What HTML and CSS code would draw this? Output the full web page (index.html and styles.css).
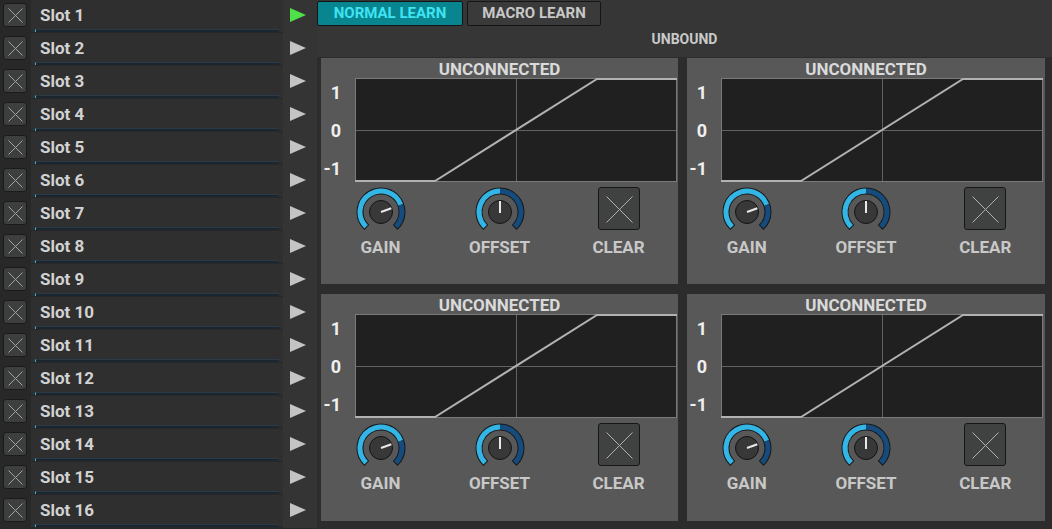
FILE: index.html
```html
<!DOCTYPE html>
<html>
<head>
<meta charset="utf-8">
<link rel="stylesheet" href="styles.css">
</head>
<body>
<div class="app">
  <div class="slots">
    <div class="slot"><div class="gutter"><div class="xbtn"><svg viewBox="0 0 22 22"><path d="M4.5 4.5L18.5 18.5M18.5 4.5L4.5 18.5"/></svg></div></div><div class="name"><span class="label">Slot 1</span><div class="meter"></div></div><div class="arrow"><span class="tri on"></span></div></div>
    <div class="slot"><div class="gutter"><div class="xbtn"><svg viewBox="0 0 22 22"><path d="M4.5 4.5L18.5 18.5M18.5 4.5L4.5 18.5"/></svg></div></div><div class="name"><span class="label">Slot 2</span><div class="meter"></div></div><div class="arrow"><span class="tri"></span></div></div>
    <div class="slot"><div class="gutter"><div class="xbtn"><svg viewBox="0 0 22 22"><path d="M4.5 4.5L18.5 18.5M18.5 4.5L4.5 18.5"/></svg></div></div><div class="name"><span class="label">Slot 3</span><div class="meter"></div></div><div class="arrow"><span class="tri"></span></div></div>
    <div class="slot"><div class="gutter"><div class="xbtn"><svg viewBox="0 0 22 22"><path d="M4.5 4.5L18.5 18.5M18.5 4.5L4.5 18.5"/></svg></div></div><div class="name"><span class="label">Slot 4</span><div class="meter"></div></div><div class="arrow"><span class="tri"></span></div></div>
    <div class="slot"><div class="gutter"><div class="xbtn"><svg viewBox="0 0 22 22"><path d="M4.5 4.5L18.5 18.5M18.5 4.5L4.5 18.5"/></svg></div></div><div class="name"><span class="label">Slot 5</span><div class="meter"></div></div><div class="arrow"><span class="tri"></span></div></div>
    <div class="slot"><div class="gutter"><div class="xbtn"><svg viewBox="0 0 22 22"><path d="M4.5 4.5L18.5 18.5M18.5 4.5L4.5 18.5"/></svg></div></div><div class="name"><span class="label">Slot 6</span><div class="meter"></div></div><div class="arrow"><span class="tri"></span></div></div>
    <div class="slot"><div class="gutter"><div class="xbtn"><svg viewBox="0 0 22 22"><path d="M4.5 4.5L18.5 18.5M18.5 4.5L4.5 18.5"/></svg></div></div><div class="name"><span class="label">Slot 7</span><div class="meter"></div></div><div class="arrow"><span class="tri"></span></div></div>
    <div class="slot"><div class="gutter"><div class="xbtn"><svg viewBox="0 0 22 22"><path d="M4.5 4.5L18.5 18.5M18.5 4.5L4.5 18.5"/></svg></div></div><div class="name"><span class="label">Slot 8</span><div class="meter"></div></div><div class="arrow"><span class="tri"></span></div></div>
    <div class="slot"><div class="gutter"><div class="xbtn"><svg viewBox="0 0 22 22"><path d="M4.5 4.5L18.5 18.5M18.5 4.5L4.5 18.5"/></svg></div></div><div class="name"><span class="label">Slot 9</span><div class="meter"></div></div><div class="arrow"><span class="tri"></span></div></div>
    <div class="slot"><div class="gutter"><div class="xbtn"><svg viewBox="0 0 22 22"><path d="M4.5 4.5L18.5 18.5M18.5 4.5L4.5 18.5"/></svg></div></div><div class="name"><span class="label">Slot 10</span><div class="meter"></div></div><div class="arrow"><span class="tri"></span></div></div>
    <div class="slot"><div class="gutter"><div class="xbtn"><svg viewBox="0 0 22 22"><path d="M4.5 4.5L18.5 18.5M18.5 4.5L4.5 18.5"/></svg></div></div><div class="name"><span class="label">Slot 11</span><div class="meter"></div></div><div class="arrow"><span class="tri"></span></div></div>
    <div class="slot"><div class="gutter"><div class="xbtn"><svg viewBox="0 0 22 22"><path d="M4.5 4.5L18.5 18.5M18.5 4.5L4.5 18.5"/></svg></div></div><div class="name"><span class="label">Slot 12</span><div class="meter"></div></div><div class="arrow"><span class="tri"></span></div></div>
    <div class="slot"><div class="gutter"><div class="xbtn"><svg viewBox="0 0 22 22"><path d="M4.5 4.5L18.5 18.5M18.5 4.5L4.5 18.5"/></svg></div></div><div class="name"><span class="label">Slot 13</span><div class="meter"></div></div><div class="arrow"><span class="tri"></span></div></div>
    <div class="slot"><div class="gutter"><div class="xbtn"><svg viewBox="0 0 22 22"><path d="M4.5 4.5L18.5 18.5M18.5 4.5L4.5 18.5"/></svg></div></div><div class="name"><span class="label">Slot 14</span><div class="meter"></div></div><div class="arrow"><span class="tri"></span></div></div>
    <div class="slot"><div class="gutter"><div class="xbtn"><svg viewBox="0 0 22 22"><path d="M4.5 4.5L18.5 18.5M18.5 4.5L4.5 18.5"/></svg></div></div><div class="name"><span class="label">Slot 15</span><div class="meter"></div></div><div class="arrow"><span class="tri"></span></div></div>
    <div class="slot"><div class="gutter"><div class="xbtn"><svg viewBox="0 0 22 22"><path d="M4.5 4.5L18.5 18.5M18.5 4.5L4.5 18.5"/></svg></div></div><div class="name"><span class="label">Slot 16</span><div class="meter"></div></div><div class="arrow"><span class="tri"></span></div></div>
  </div>

  <div class="main">
    <div class="header">
      <div class="learn">
        <div class="lbtn on">NORMAL LEARN</div>
        <div class="lbtn macro">MACRO LEARN</div>
      </div>
      <div class="unbound">UNBOUND</div>
    </div>

    <div class="grid">
      <div class="panel">
        <div class="title">UNCONNECTED</div>
        <div class="plot">
          <div class="axis"><span>1</span><span>0</span><span>-1</span></div>
          <svg class="graph" width="322" height="104" viewBox="0 0 322 104">
            <rect x="0.5" y="0.5" width="321" height="103" fill="#202020" stroke="#7a7a7a"/>
            <path d="M161.5 1V103M1 52.5H321" stroke="#626262" stroke-width="1"/>
            <polyline points="0,103 80,103 242,1 322,1" fill="none" stroke="#b2b2b2" stroke-width="2"/>
          </svg>
        </div>
        <div class="controls">
          <div class="ctl">
            <svg class="knob" width="50" height="44" viewBox="0 0 50 44">
              <path d="M10.81 40.48A21 21 0 1 1 39.19 40.48" fill="none" stroke="#181818" stroke-width="7"/>
              <path d="M10.15 39.85A21 21 0 1 1 44.73 17.82" fill="none" stroke="#33b5e5" stroke-width="5"/>
              <path d="M44.73 17.82A21 21 0 0 1 39.85 39.85" fill="none" stroke="#154b7d" stroke-width="5"/>
              <circle cx="25" cy="25" r="11.5" fill="#383838" stroke="#141414" stroke-width="1"/>
              <path d="M25 25L35.34 21.24" stroke="#e8e8e8" stroke-width="2"/>
            </svg>
            <div class="cap">GAIN</div>
          </div>
          <div class="ctl">
            <svg class="knob" width="50" height="44" viewBox="0 0 50 44">
              <path d="M10.81 40.48A21 21 0 1 1 39.19 40.48" fill="none" stroke="#181818" stroke-width="7"/>
              <path d="M10.15 39.85A21 21 0 0 1 25 4" fill="none" stroke="#33b5e5" stroke-width="5"/>
              <path d="M25 4A21 21 0 0 1 39.85 39.85" fill="none" stroke="#154b7d" stroke-width="5"/>
              <circle cx="25" cy="25" r="11.5" fill="#383838" stroke="#141414" stroke-width="1"/>
              <path d="M25 26V14" stroke="#e8e8e8" stroke-width="2"/>
            </svg>
            <div class="cap">OFFSET</div>
          </div>
          <div class="ctl">
            <div class="clearbox"><div class="clear"><svg viewBox="0 0 40 41"><path d="M7.5 8.5L33.5 34.5M33.5 8.5L7.5 34.5"/></svg></div></div>
            <div class="cap">CLEAR</div>
          </div>
        </div>
      </div>

      <div class="panel">
        <div class="title">UNCONNECTED</div>
        <div class="plot">
          <div class="axis"><span>1</span><span>0</span><span>-1</span></div>
          <svg class="graph" width="322" height="104" viewBox="0 0 322 104">
            <rect x="0.5" y="0.5" width="321" height="103" fill="#202020" stroke="#7a7a7a"/>
            <path d="M161.5 1V103M1 52.5H321" stroke="#626262" stroke-width="1"/>
            <polyline points="0,103 80,103 242,1 322,1" fill="none" stroke="#b2b2b2" stroke-width="2"/>
          </svg>
        </div>
        <div class="controls">
          <div class="ctl">
            <svg class="knob" width="50" height="44" viewBox="0 0 50 44">
              <path d="M10.81 40.48A21 21 0 1 1 39.19 40.48" fill="none" stroke="#181818" stroke-width="7"/>
              <path d="M10.15 39.85A21 21 0 1 1 44.73 17.82" fill="none" stroke="#33b5e5" stroke-width="5"/>
              <path d="M44.73 17.82A21 21 0 0 1 39.85 39.85" fill="none" stroke="#154b7d" stroke-width="5"/>
              <circle cx="25" cy="25" r="11.5" fill="#383838" stroke="#141414" stroke-width="1"/>
              <path d="M25 25L35.34 21.24" stroke="#e8e8e8" stroke-width="2"/>
            </svg>
            <div class="cap">GAIN</div>
          </div>
          <div class="ctl">
            <svg class="knob" width="50" height="44" viewBox="0 0 50 44">
              <path d="M10.81 40.48A21 21 0 1 1 39.19 40.48" fill="none" stroke="#181818" stroke-width="7"/>
              <path d="M10.15 39.85A21 21 0 0 1 25 4" fill="none" stroke="#33b5e5" stroke-width="5"/>
              <path d="M25 4A21 21 0 0 1 39.85 39.85" fill="none" stroke="#154b7d" stroke-width="5"/>
              <circle cx="25" cy="25" r="11.5" fill="#383838" stroke="#141414" stroke-width="1"/>
              <path d="M25 26V14" stroke="#e8e8e8" stroke-width="2"/>
            </svg>
            <div class="cap">OFFSET</div>
          </div>
          <div class="ctl">
            <div class="clearbox"><div class="clear"><svg viewBox="0 0 40 41"><path d="M7.5 8.5L33.5 34.5M33.5 8.5L7.5 34.5"/></svg></div></div>
            <div class="cap">CLEAR</div>
          </div>
        </div>
      </div>

      <div class="panel">
        <div class="title">UNCONNECTED</div>
        <div class="plot">
          <div class="axis"><span>1</span><span>0</span><span>-1</span></div>
          <svg class="graph" width="322" height="104" viewBox="0 0 322 104">
            <rect x="0.5" y="0.5" width="321" height="103" fill="#202020" stroke="#7a7a7a"/>
            <path d="M161.5 1V103M1 52.5H321" stroke="#626262" stroke-width="1"/>
            <polyline points="0,103 80,103 242,1 322,1" fill="none" stroke="#b2b2b2" stroke-width="2"/>
          </svg>
        </div>
        <div class="controls">
          <div class="ctl">
            <svg class="knob" width="50" height="44" viewBox="0 0 50 44">
              <path d="M10.81 40.48A21 21 0 1 1 39.19 40.48" fill="none" stroke="#181818" stroke-width="7"/>
              <path d="M10.15 39.85A21 21 0 1 1 44.73 17.82" fill="none" stroke="#33b5e5" stroke-width="5"/>
              <path d="M44.73 17.82A21 21 0 0 1 39.85 39.85" fill="none" stroke="#154b7d" stroke-width="5"/>
              <circle cx="25" cy="25" r="11.5" fill="#383838" stroke="#141414" stroke-width="1"/>
              <path d="M25 25L35.34 21.24" stroke="#e8e8e8" stroke-width="2"/>
            </svg>
            <div class="cap">GAIN</div>
          </div>
          <div class="ctl">
            <svg class="knob" width="50" height="44" viewBox="0 0 50 44">
              <path d="M10.81 40.48A21 21 0 1 1 39.19 40.48" fill="none" stroke="#181818" stroke-width="7"/>
              <path d="M10.15 39.85A21 21 0 0 1 25 4" fill="none" stroke="#33b5e5" stroke-width="5"/>
              <path d="M25 4A21 21 0 0 1 39.85 39.85" fill="none" stroke="#154b7d" stroke-width="5"/>
              <circle cx="25" cy="25" r="11.5" fill="#383838" stroke="#141414" stroke-width="1"/>
              <path d="M25 26V14" stroke="#e8e8e8" stroke-width="2"/>
            </svg>
            <div class="cap">OFFSET</div>
          </div>
          <div class="ctl">
            <div class="clearbox"><div class="clear"><svg viewBox="0 0 40 41"><path d="M7.5 8.5L33.5 34.5M33.5 8.5L7.5 34.5"/></svg></div></div>
            <div class="cap">CLEAR</div>
          </div>
        </div>
      </div>

      <div class="panel">
        <div class="title">UNCONNECTED</div>
        <div class="plot">
          <div class="axis"><span>1</span><span>0</span><span>-1</span></div>
          <svg class="graph" width="322" height="104" viewBox="0 0 322 104">
            <rect x="0.5" y="0.5" width="321" height="103" fill="#202020" stroke="#7a7a7a"/>
            <path d="M161.5 1V103M1 52.5H321" stroke="#626262" stroke-width="1"/>
            <polyline points="0,103 80,103 242,1 322,1" fill="none" stroke="#b2b2b2" stroke-width="2"/>
          </svg>
        </div>
        <div class="controls">
          <div class="ctl">
            <svg class="knob" width="50" height="44" viewBox="0 0 50 44">
              <path d="M10.81 40.48A21 21 0 1 1 39.19 40.48" fill="none" stroke="#181818" stroke-width="7"/>
              <path d="M10.15 39.85A21 21 0 1 1 44.73 17.82" fill="none" stroke="#33b5e5" stroke-width="5"/>
              <path d="M44.73 17.82A21 21 0 0 1 39.85 39.85" fill="none" stroke="#154b7d" stroke-width="5"/>
              <circle cx="25" cy="25" r="11.5" fill="#383838" stroke="#141414" stroke-width="1"/>
              <path d="M25 25L35.34 21.24" stroke="#e8e8e8" stroke-width="2"/>
            </svg>
            <div class="cap">GAIN</div>
          </div>
          <div class="ctl">
            <svg class="knob" width="50" height="44" viewBox="0 0 50 44">
              <path d="M10.81 40.48A21 21 0 1 1 39.19 40.48" fill="none" stroke="#181818" stroke-width="7"/>
              <path d="M10.15 39.85A21 21 0 0 1 25 4" fill="none" stroke="#33b5e5" stroke-width="5"/>
              <path d="M25 4A21 21 0 0 1 39.85 39.85" fill="none" stroke="#154b7d" stroke-width="5"/>
              <circle cx="25" cy="25" r="11.5" fill="#383838" stroke="#141414" stroke-width="1"/>
              <path d="M25 26V14" stroke="#e8e8e8" stroke-width="2"/>
            </svg>
            <div class="cap">OFFSET</div>
          </div>
          <div class="ctl">
            <div class="clearbox"><div class="clear"><svg viewBox="0 0 40 41"><path d="M7.5 8.5L33.5 34.5M33.5 8.5L7.5 34.5"/></svg></div></div>
            <div class="cap">CLEAR</div>
          </div>
        </div>
      </div>
    </div>
  </div>
</div>
</body>
</html>
```

FILE: styles.css
```css
* { box-sizing: border-box; }
html, body { margin: 0; padding: 0; }
body {
  background: #2b2b2b;
  font-family: Roboto, "Liberation Sans", sans-serif;
  font-weight: 700;
  width: 1052px;
  height: 529px;
  overflow: hidden;
}
.app { display: flex; height: 529px; }

/* slot list */
.slots { width: 317px; display: flex; flex-direction: column; background: #282828; }
.slot { display: flex; height: 33px; }
.gutter { width: 31px; background: #282828; padding: 3px 0 0 3px; }
.xbtn {
  width: 24px; height: 24px;
  background: #3d3f3f;
  border: 1px solid #1a1a1a;
  border-radius: 3px;
}
.xbtn svg { display: block; width: 22px; height: 22px; }
.xbtn path { stroke: #a2a2a2; stroke-width: 1; fill: none; }
.name {
  width: 252px; height: 32px;
  background: #2f2f2f;
  display: flex; flex-direction: column;
}
.label {
  display: block;
  padding: 5px 0 0 9px;
  height: 25px;
  line-height: 20px;
  font-size: 17px;
  color: #d2d2d2;
}
.meter {
  margin: 4px 0 0 4px;
  width: 244px; height: 3px;
  background: #1b2630;
  border-top: 1px solid #2a3a46;
  border-left: 1px solid #36b4c4;
}
.arrow { width: 34px; background: #343434; padding: 8px 0 0 7px; }
.tri {
  display: block; width: 0; height: 0;
  border-left: 16px solid #c4c4c4;
  border-top: 7.5px solid transparent;
  border-bottom: 7.5px solid transparent;
}
.tri.on { border-left-color: #4fe04a; }

/* main */
.main { flex: 1; display: flex; flex-direction: column; background: #363636; }
.header { height: 57px; }
.learn { display: flex; gap: 4px; padding-top: 1px; }
.lbtn {
  height: 25px;
  border: 1px solid #141414;
  border-radius: 2px;
  background: #3a3a3a;
  color: #c8c8c8;
  font-size: 15px;
  line-height: 23px;
  text-align: center;
}
.lbtn.on { width: 146px; background: #08858f; color: #3fe3f2; }
.lbtn.macro { width: 134px; }
.unbound {
  margin-top: 5px;
  text-align: center;
  font-size: 14px;
  line-height: 16px;
  color: #cacaca;
}

.grid {
  flex: 1;
  background: #2c2c2c;
  display: grid;
  grid-template-columns: 357px 358px;
  grid-template-rows: 226px 227px;
  column-gap: 9px;
  row-gap: 10px;
  padding: 1px 7px 8px 4px;
}
.panel { background: #585858; display: flex; flex-direction: column; }
.title {
  height: 20px;
  line-height: 22px;
  text-align: center;
  font-size: 17px;
  color: #dadada;
  white-space: nowrap;
}
.plot { display: flex; height: 104px; }
.axis {
  width: 34px;
  padding-right: 14px;
  margin-top: -4px;
  display: flex; flex-direction: column; align-items: flex-end;
  font-size: 18px;
  line-height: 38px;
  color: #efefef;
}
.graph { display: block; }
.controls {
  display: grid;
  grid-template-columns: repeat(3, 1fr);
  margin-top: 5px;
}
.ctl { display: flex; flex-direction: column; align-items: center; }
.knob { display: block; }
.clearbox { width: 50px; height: 44px; display: flex; justify-content: center; }
.clear {
  width: 42px; height: 43px;
  background: #404242;
  border: 1px solid #161616;
  border-radius: 3px;
}
.clear svg { display: block; width: 40px; height: 41px; }
.clear path { stroke: #b0b0b0; stroke-width: 1; fill: none; }
.cap {
  margin-top: 6px;
  font-size: 17px;
  line-height: 20px;
  color: #c8c8c8;
}
```
